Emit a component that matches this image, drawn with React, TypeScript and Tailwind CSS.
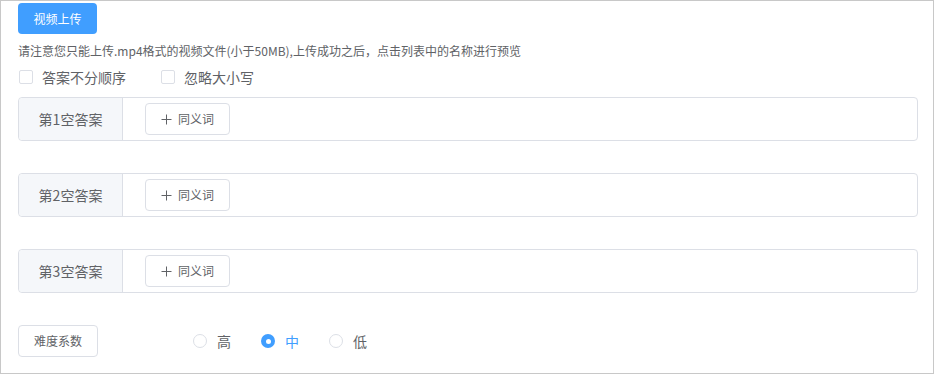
import React from "react";

const font = { fontFamily: '"Noto Sans CJK SC", "Noto Sans", sans-serif' };

function AnswerRow({ n, first }: { n: number; first?: boolean }) {
  return (
    <div
      className={`flex h-[44px] w-[900px] rounded-[4px] border border-[#dcdfe6] ${first ? "mt-[13px]" : "mt-[32px]"}`}
    >
      <div className="flex w-[104px] shrink-0 items-center justify-center rounded-l-[4px] border-r border-[#dcdfe6] bg-[#f5f7fa] text-[14px] text-[#606266]">
        第{n}空答案
      </div>
      <div className="flex items-center pl-[22px]">
        <div className="flex h-[32px] w-[85px] items-center justify-center gap-[6px] rounded-[4px] border border-[#dcdfe6] bg-white text-[12px] text-[#606266]">
          <svg width="11" height="11" viewBox="0 0 11 11" className="mt-[1px]">
            <path d="M5.5 0.5v10M0.5 5.5h10" stroke="#606266" strokeWidth="1" fill="none" />
          </svg>
          <span>同义词</span>
        </div>
      </div>
    </div>
  );
}

function Radio({ label, checked }: { label: string; checked?: boolean }) {
  return (
    <div className="flex items-center gap-[10px]">
      {checked ? (
        <span className="flex h-[14px] w-[14px] items-center justify-center rounded-full bg-[#409eff]">
          <span className="h-[5px] w-[5px] rounded-full bg-white" />
        </span>
      ) : (
        <span className="h-[14px] w-[14px] rounded-full border border-[#dcdfe6] bg-white" />
      )}
      <span className={`text-[14px] ${checked ? "text-[#409eff]" : "text-[#606266]"}`}>{label}</span>
    </div>
  );
}

export default function App() {
  return (
    <div
      style={font}
      className="h-[374px] w-[934px] border border-[#c8c8c8] bg-white pl-[17px] pt-[2px]"
    >
      <div className="flex h-[31px] w-[79px] items-center justify-center rounded-[4px] bg-[#409eff] text-[12px] text-white">
        视频上传
      </div>
      <div className="mt-[9px] text-[12px] leading-[16px] text-[#606266]">
        请注意您只能上传.mp4格式的视频文件(小于50MB),上传成功之后，点击列表中的名称进行预览
      </div>
      <div className="mt-[11px] flex h-[14px] items-center text-[14px] text-[#606266]">
        <div className="flex items-center">
          <span className="ml-[1px] h-[14px] w-[14px] rounded-[2px] border border-[#dcdfe6] bg-white" />
          <span className="ml-[9px]">答案不分顺序</span>
        </div>
        <div className="ml-[35px] flex items-center">
          <span className="h-[14px] w-[14px] rounded-[2px] border border-[#dcdfe6] bg-white" />
          <span className="ml-[9px]">忽略大小写</span>
        </div>
      </div>
      <AnswerRow n={1} first />
      <AnswerRow n={2} />
      <AnswerRow n={3} />
      <div className="mt-[32px] flex items-center">
        <div className="flex h-[32px] w-[80px] items-center justify-center rounded-[4px] border border-[#dcdfe6] text-[12px] text-[#606266]">
          难度系数
        </div>
        <div className="ml-[95px] flex items-center gap-[30px]">
          <Radio label="高" />
          <Radio label="中" checked />
          <Radio label="低" />
        </div>
      </div>
    </div>
  );
}
